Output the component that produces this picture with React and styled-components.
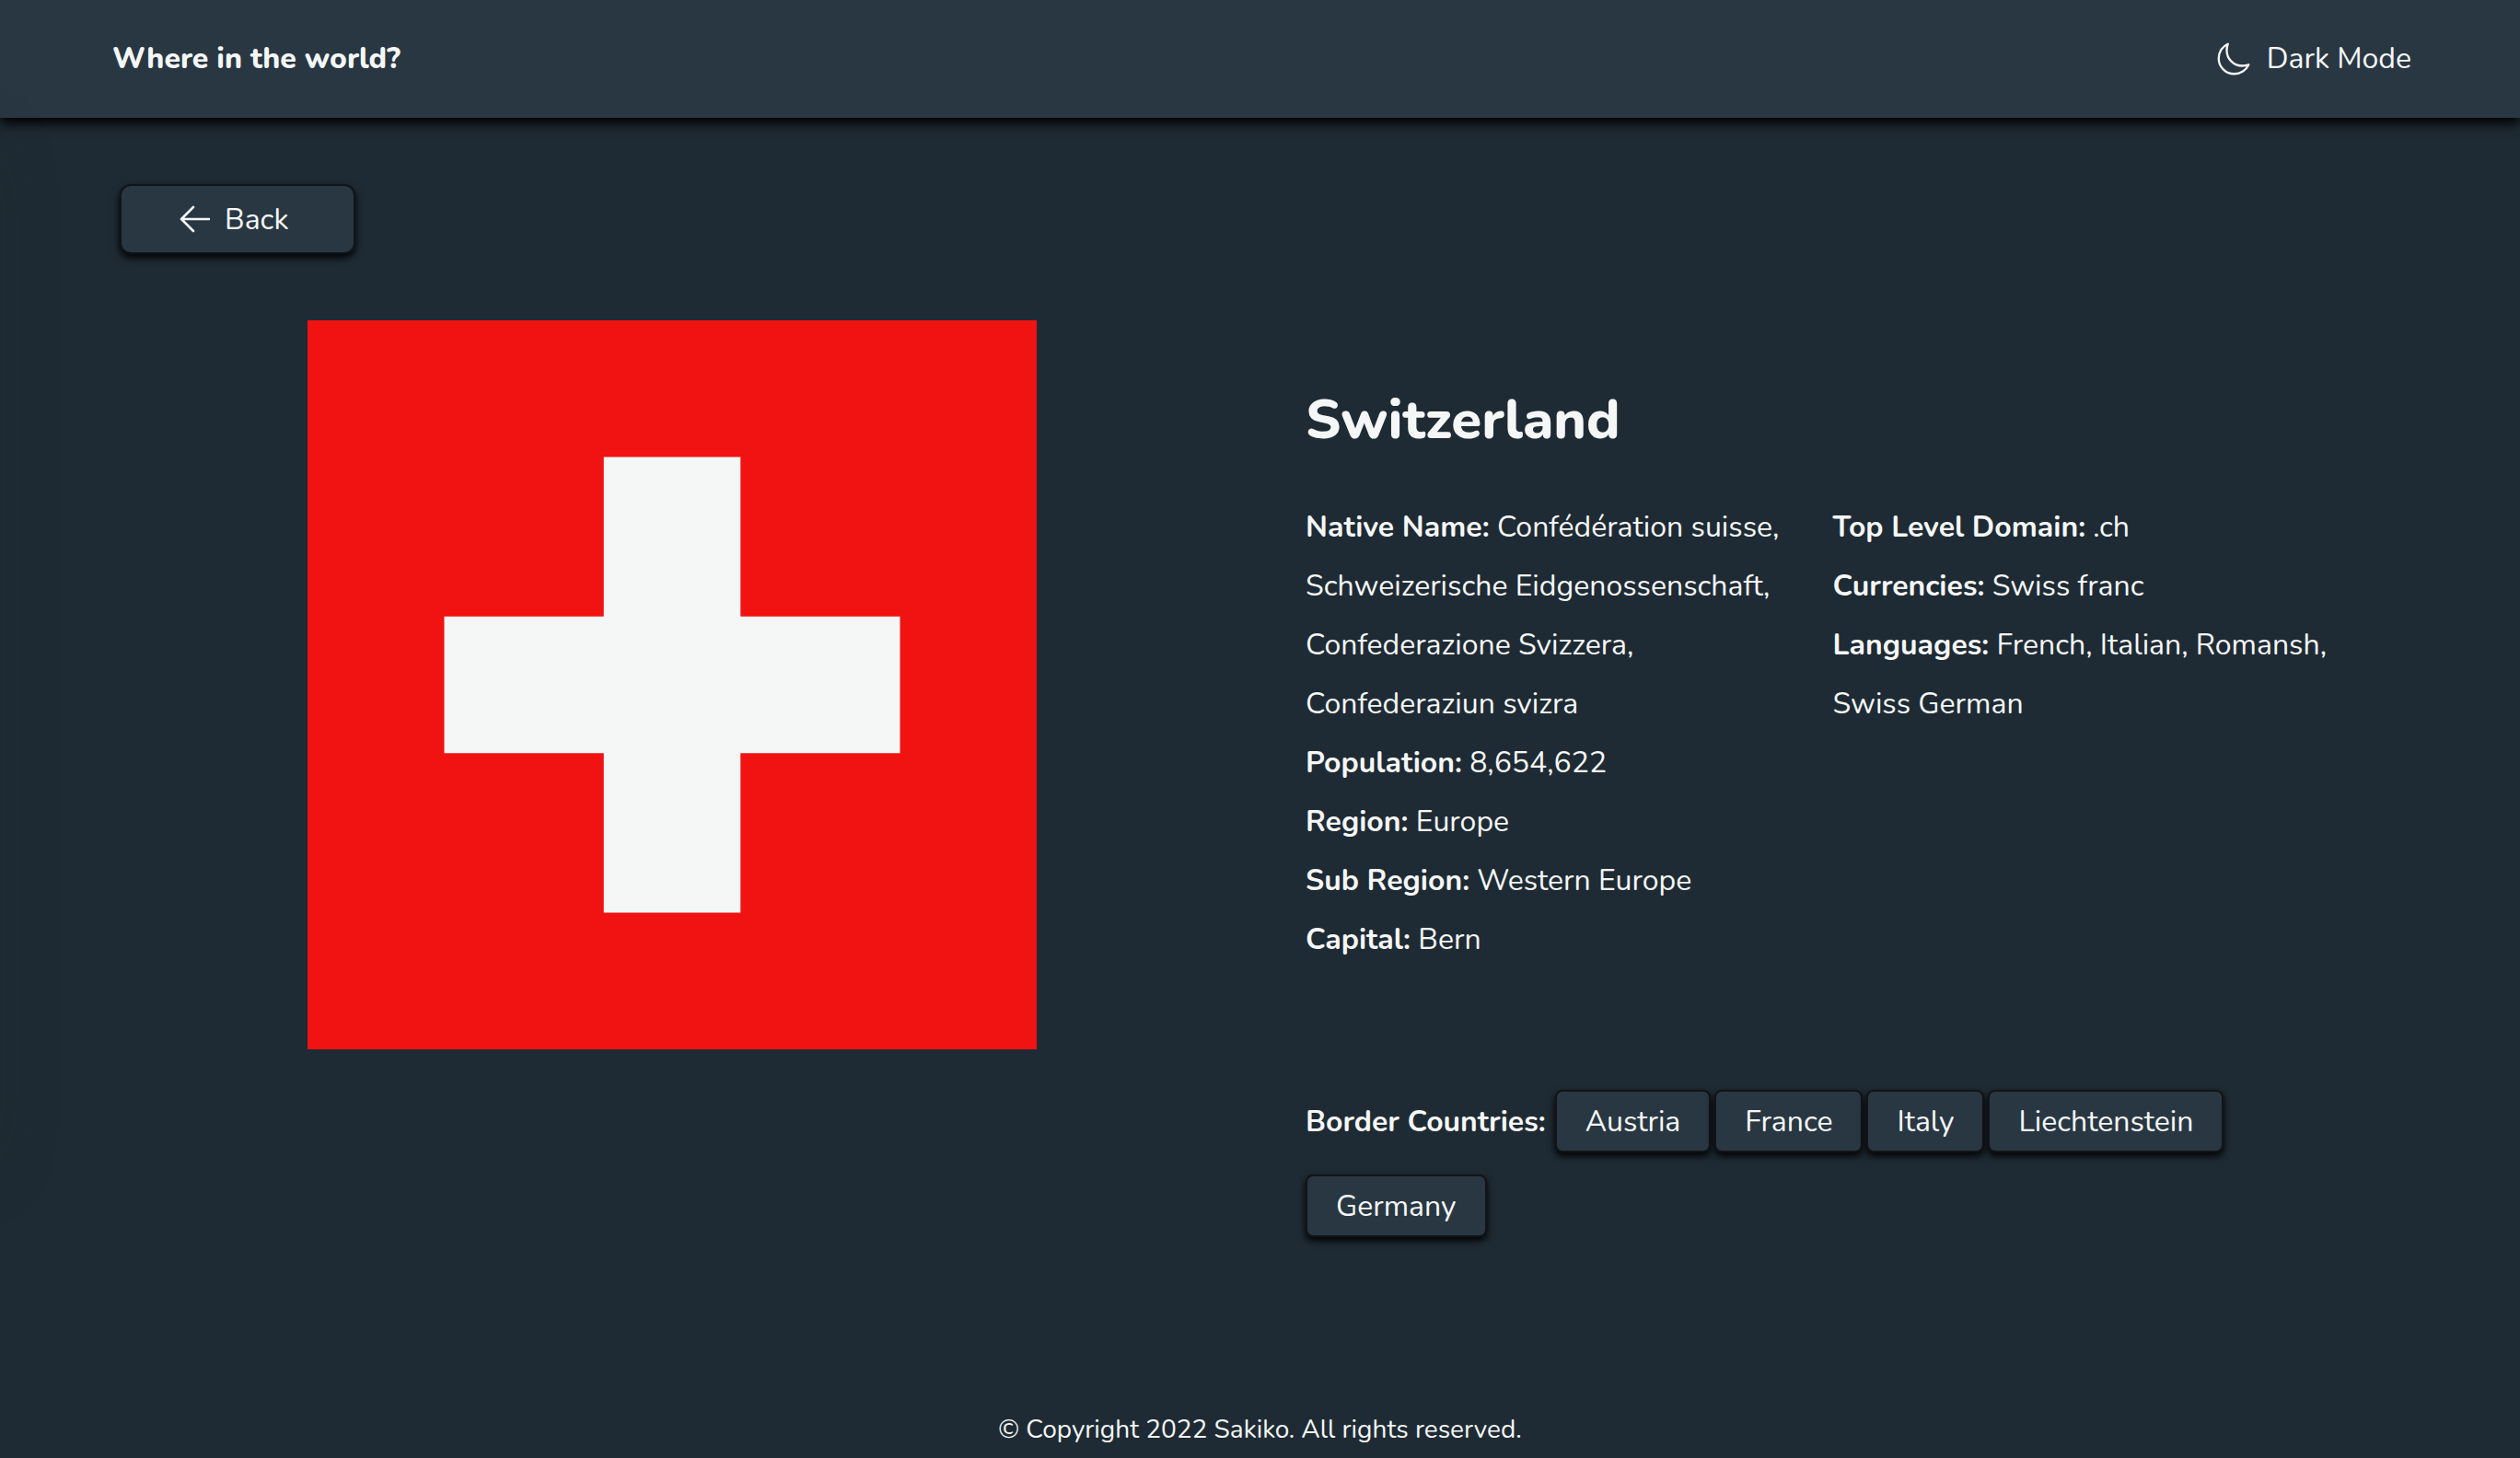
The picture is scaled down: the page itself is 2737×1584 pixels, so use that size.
import React from "react";
import styled, { createGlobalStyle } from "styled-components";

const color = {
  page: "#1f2b34",
  surface: "#293742",
  edge: "#111417",
  text: "#f5f7f7",
};

const GlobalStyle = createGlobalStyle`
  *, *::before, *::after { box-sizing: border-box; }
  body {
    margin: 0;
    background: ${color.page};
    color: ${color.text};
    font-family: Nunito, Lato, "Liberation Sans", sans-serif;
    font-size: 32px;
  }
  button { font: inherit; color: inherit; cursor: pointer; }
`;

const Page = styled.div`
  position: relative;
  min-height: 100vh;
  display: flex;
  flex-direction: column;
  overflow: hidden;

  /* faint teal glow along the left edge */
  &::after {
    content: "";
    position: absolute;
    top: 10%;
    bottom: 20%;
    left: -60px;
    width: 40px;
    box-shadow: 0 0 80px rgba(16, 48, 48, 0.3);
    pointer-events: none;
  }
`;

const Header = styled.header`
  display: flex;
  align-items: center;
  justify-content: space-between;
  padding: 32px 118px 32px 122px;
  background: ${color.surface};
  box-shadow: 0 6px 12px #000;
`;

const Brand = styled.a`
  color: inherit;
  text-decoration: none;
  font-weight: 800;
  line-height: 64px;
`;

const ThemeButton = styled.button`
  display: flex;
  align-items: center;
  gap: 16px;
  padding: 0;
  border: 0;
  background: none;
  line-height: 64px;
`;

const Main = styled.main`
  flex: 1;
  padding: 72px 122px 0;
`;

const Raised = styled.button`
  border: 2px solid ${color.edge};
  background: ${color.surface};
  box-shadow: 0 4px 8px #000;
`;

const BackButton = styled(Raised)`
  display: flex;
  align-items: center;
  gap: 16px;
  width: 256px;
  height: 76px;
  margin-left: 8px;
  padding: 0 0 0 62px;
  border-radius: 12px;
`;

const Country = styled.div`
  display: grid;
  grid-template-columns: 1216fr 1197fr;
  column-gap: 80px;
  margin-top: 72px;
`;

const Flag = styled.svg`
  display: block;
  width: 100%;
  max-width: 792px;
  height: auto;
  margin: 0 auto;
`;

const Details = styled.section`
  padding: 68px 84px 0 0;
`;

const Name = styled.h1`
  margin: 0;
  font-size: 60px;
  font-weight: 800;
  line-height: 80px;
`;

const Facts = styled.div`
  display: grid;
  grid-template-columns: 1fr 1fr;
  column-gap: 32px;
  margin-top: 45px;
`;

const FactList = styled.dl`
  margin: 0;
  line-height: 64px;
`;

const Term = styled.dt`
  display: inline;
  font-weight: 700;
`;

const Value = styled.dd`
  display: inline;
  margin: 0;
`;

const Borders = styled.div`
  display: flex;
  flex-wrap: wrap;
  align-items: center;
  gap: 24px 4px;
  margin-top: 131px;
`;

const BordersLabel = styled.span`
  margin-right: 6px;
  font-weight: 700;
`;

const BorderButton = styled(Raised)`
  height: 68px;
  padding: 0 31px;
  border-radius: 8px;
`;

const Footer = styled.footer`
  padding: 13px 0 11px;
  font-size: 28px;
  line-height: 40px;
  text-align: center;
`;

const MoonIcon = () => (
  <svg width="40" height="40" viewBox="0 0 512 512" fill="none" stroke="currentColor" strokeWidth="30" strokeLinejoin="round" aria-hidden="true">
    <path d="M160 136c0-30.62 4.51-61.61 16-88C99.57 81.27 48 159.32 48 248c0 119.29 96.71 216 216 216 88.68 0 166.73-51.57 200-128-26.39 11.49-57.38 16-88 16-119.29 0-216-96.71-216-216z" />
  </svg>
);

const ArrowIcon = () => (
  <svg width="34" height="30" viewBox="0 0 34 30" fill="none" stroke="currentColor" strokeWidth="2.6" strokeLinecap="round" strokeLinejoin="round" aria-hidden="true">
    <path d="M16 2 3 15l13 13M3 15h30" />
  </svg>
);

const facts = [
  [
    ["Native Name", "Confédération suisse, Schweizerische Eidgenossenschaft, Confederazione Svizzera, Confederaziun svizra"],
    ["Population", "8,654,622"],
    ["Region", "Europe"],
    ["Sub Region", "Western Europe"],
    ["Capital", "Bern"],
  ],
  [
    ["Top Level Domain", ".ch"],
    ["Currencies", "Swiss franc"],
    ["Languages", "French, Italian, Romansh, Swiss German"],
  ],
];

const borders = ["Austria", "France", "Italy", "Liechtenstein", "Germany"];

export default function App() {
  return (
    <Page>
      <GlobalStyle />
      <Header>
        <Brand href="#">Where in the world?</Brand>
        <ThemeButton type="button">
          <MoonIcon />
          Dark Mode
        </ThemeButton>
      </Header>
      <Main>
        <BackButton type="button">
          <ArrowIcon />
          Back
        </BackButton>
        <Country>
          <Flag viewBox="0 0 32 32" role="img" aria-label="Flag of Switzerland">
            <path fill="#f11212" d="M0 0h32v32H0z" />
            <path fill="#f5f7f7" d="M13 6h6v7h7v6h-7v7h-6v-7H6v-6h7z" />
          </Flag>
          <Details>
            <Name>Switzerland</Name>
            <Facts>
              {facts.map((list, i) => (
                <FactList key={i}>
                  {list.map(([term, value]) => (
                    <div key={term}>
                      <Term>{term}:</Term> <Value>{value}</Value>
                    </div>
                  ))}
                </FactList>
              ))}
            </Facts>
            <Borders>
              <BordersLabel>Border Countries:</BordersLabel>
              {borders.map((name) => (
                <BorderButton type="button" key={name}>{name}</BorderButton>
              ))}
            </Borders>
          </Details>
        </Country>
      </Main>
      <Footer>© Copyright 2022 Sakiko. All rights reserved.</Footer>
    </Page>
  );
}
